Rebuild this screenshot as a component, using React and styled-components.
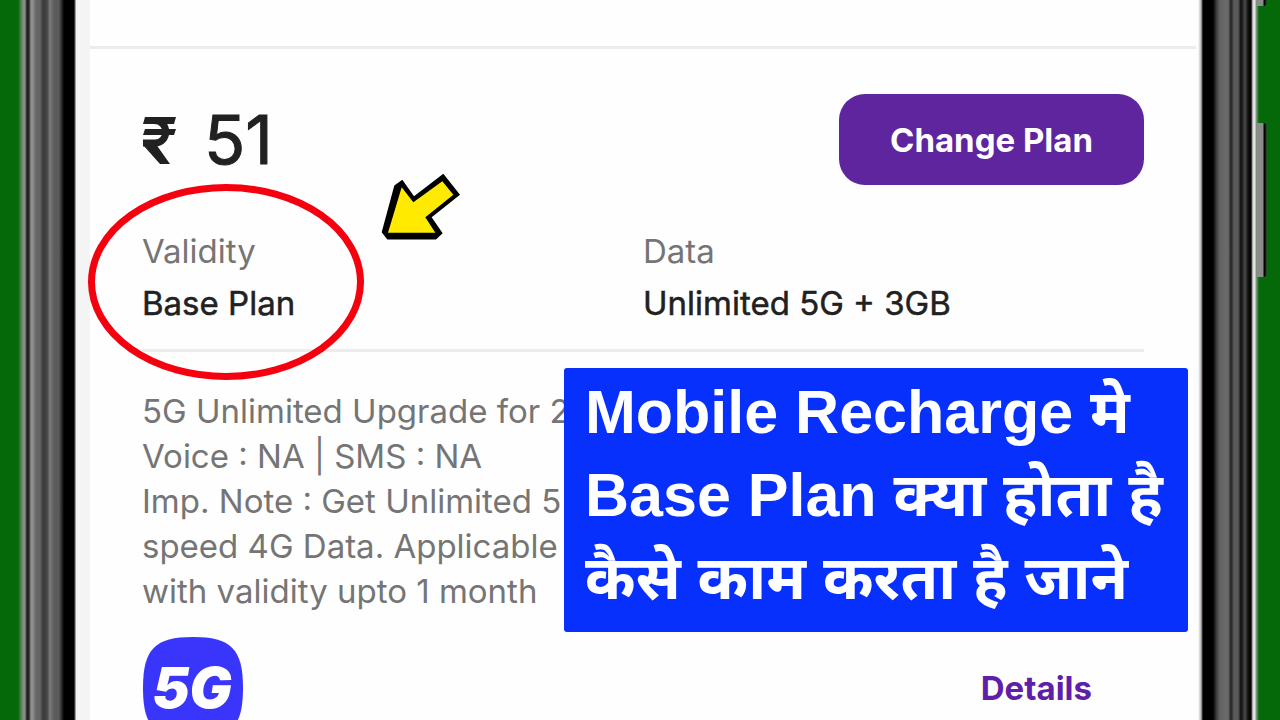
/**
 *
 * PlanDetailsPage
 *
 */

import React from 'react';
import styled, { createGlobalStyle } from 'styled-components';

const GlobalStyle = createGlobalStyle`
  * {
    box-sizing: border-box;
  }

  body {
    margin: 0;
    background-color: #05690a;
    font-family: 'Inter', 'Noto Sans', sans-serif;
  }
`;

const PageWrapper = styled.div`
  width: 100%;
  height: 100vh;
  display: flex;
  overflow: hidden;
`;

const LeftFrame = styled.div`
  flex: 0 0 76px;
  background: linear-gradient(
    to right,
    #05690a 18px,
    #7d927d 23px,
    #8a8a8a 25px,
    #1c1c1c 27px,
    #2a2a2a 29px,
    #929292 31px,
    #8c8c8c 33px,
    #666666 36px,
    #646464 40px,
    #3a3a3a 43px,
    #444444 47px,
    #7c7c7c 50px,
    #5c5c5c 54px,
    #5a5a5a 59px,
    #000000 64px,
    #000000 74px,
    #d0d0d0 76px
  );
`;

const RightFrame = styled.div`
  position: relative;
  flex: 0 0 82px;
  background: linear-gradient(
    to right,
    #ffffff 0px,
    #b8b8b8 3px,
    #000000 5px,
    #000000 15px,
    #444444 19px,
    #626262 22px,
    #6c6c6c 30px,
    #222222 33px,
    #5a5a5a 36px,
    #5a5a5a 40px,
    #0c0c0c 43px,
    #4a4a4a 47px,
    #111111 50px,
    #000000 53px,
    #dddddd 55px,
    #e4e4e4 57px,
    #8c9c8c 58px,
    #05690a 61px
  );
`;

const SideButton = styled.span`
  position: absolute;
  left: 59px;
  top: ${props => props.$top};
  width: 10px;
  height: 154px;
  border-radius: 0 4px 4px 0;
  background: linear-gradient(
    to right,
    #8c8c8c 6px,
    #050505 7px,
    #050505 8px,
    #2b5a2b 10px
  );
`;

const Screen = styled.main`
  position: relative;
  flex: 1;
  min-width: 0;
  border-left: 14px solid #f4f4f4;
  background-color: #fefefe;
`;

const TopBar = styled.header`
  height: 49px;
  margin-right: 2px;
  border-bottom: 3px solid #ececec;
`;

const PlanCard = styled.section`
  padding: 45px 54px 0 52px;
`;

const PriceRow = styled.div`
  display: flex;
  align-items: center;
  justify-content: space-between;
`;

const Price = styled.h1`
  display: flex;
  align-items: center;
  gap: 28px;
  margin: 0;
  font-size: 68px;
  font-weight: 400;
  line-height: 91px;
  color: #212121;
  -webkit-text-stroke: 1px #212121;
`;

const Rupee = styled.svg`
  width: 34px;
  height: 48px;
`;

const ChangeButton = styled.button`
  width: 305px;
  height: 91px;
  border: 0;
  border-radius: 26px;
  background-color: #5f259f;
  color: #ffffff;
  font-family: inherit;
  font-size: 33px;
  font-weight: 700;
`;

const InfoRow = styled.dl`
  display: grid;
  grid-template-columns: 1fr 1fr;
  margin: 0;
  padding: 40px 0 20px;
  border-bottom: 3px solid #ececec;
`;

const InfoItem = styled.div`
  position: relative;
  line-height: 52px;
`;

const Label = styled.dt`
  font-size: 33px;
  color: #757575;
`;

const Value = styled.dd`
  margin: 0;
  font-size: 33px;
  color: #212121;
  -webkit-text-stroke: 0.5px #212121;
`;

const Circle = styled.svg`
  position: absolute;
  left: -55px;
  top: -42px;
  width: 278px;
  height: 198px;
`;

const Arrow = styled.svg`
  position: absolute;
  left: 238px;
  top: -52px;
  width: 80px;
  height: 67px;
`;

const Description = styled.p`
  margin: 0;
  padding-top: 37px;
  font-size: 33px;
  line-height: 45px;
  color: #757575;
  white-space: nowrap;

  & > span {
    display: block;
  }
`;

const BenefitRow = styled.div`
  display: flex;
  align-items: center;
  justify-content: space-between;
  margin-top: 23px;
  padding-right: 52px;
`;

const FiveGLogo = styled.svg`
  width: 102px;
  height: 102px;
`;

const DetailsLink = styled.a`
  color: #5f1fa8;
  font-size: 33px;
  font-weight: 700;
  text-decoration: none;
`;

const Banner = styled.h2`
  position: absolute;
  right: 10px;
  top: 368px;
  width: 624px;
  height: 264px;
  margin: 0;
  padding: 3px 0 0 21px;
  border-radius: 3px;
  background-color: #0730fd;
  color: #ffffff;
  font-family: 'Liberation Sans', 'Noto Sans', 'Noto Sans Devanagari',
    sans-serif;
  font-size: 61px;
  font-weight: 700;
  line-height: 83px;
  white-space: nowrap;

  & > span {
    display: block;
  }
`;

const description = [
  '5G Unlimited Upgrade for 2',
  'Voice : NA | SMS : NA',
  'Imp. Note : Get Unlimited 5',
  'speed 4G Data. Applicable',
  'with validity upto 1 month',
];

const banner = [
  'Mobile Recharge मे',
  'Base Plan क्या होता है',
  'कैसे काम करता है जाने',
];

export class PlanDetailsPage extends React.Component {
  render() {
    return (
      <PageWrapper>
        <LeftFrame />
        <Screen>
          <TopBar />
          <PlanCard>
            <PriceRow>
              <Price>
                <Rupee viewBox="0 0 34 48" role="img" aria-label="Rupees">
                  <path d="M3 1H34L32 8H1Z" fill="#212121" />
                  <path d="M3 13H34L32 19H1Z" fill="#212121" />
                  <path
                    d="M3 4.5H12C28 4.5 27 27 13 27H1"
                    fill="none"
                    stroke="#212121"
                    strokeWidth="7"
                  />
                  <path d="M1 24H11L28 48H18L1 29Z" fill="#212121" />
                </Rupee>
                51
              </Price>
              <ChangeButton type="button">Change Plan</ChangeButton>
            </PriceRow>
            <InfoRow>
              <InfoItem>
                <Label>Validity</Label>
                <Value>Base Plan</Value>
                <Circle viewBox="0 0 278 198" aria-hidden="true">
                  <ellipse
                    cx="139"
                    cy="99"
                    rx="134.5"
                    ry="94.5"
                    fill="none"
                    stroke="#f5000f"
                    strokeWidth="7"
                  />
                </Circle>
                <Arrow viewBox="0 0 240 200" aria-hidden="true">
                  <path
                    d="M67 20L102 69L190 2L240 65L155 132L188 180L168 199H22L5 177L43 37Z"
                    fill="#000000"
                  />
                  <path
                    d="M65 42L100 87L187 24L220 65L136 132L166 179H24Z"
                    fill="#ffea00"
                  />
                </Arrow>
              </InfoItem>
              <InfoItem>
                <Label>Data</Label>
                <Value>Unlimited 5G + 3GB</Value>
              </InfoItem>
            </InfoRow>
            <Description>
              {description.map(line => (
                <span key={line}>{line}</span>
              ))}
            </Description>
            <BenefitRow>
              <FiveGLogo viewBox="0 0 102 102" role="img" aria-label="5G">
                <path
                  d="M51 0C89 0 101 12 101 51S89 102 51 102S1 90 1 51S13 0 51 0Z"
                  fill="#3a35fb"
                />
                <text
                  x="50"
                  y="71"
                  textAnchor="middle"
                  fill="#ffffff"
                  fontSize="56"
                  fontWeight="900"
                  fontStyle="italic"
                >
                  5G
                </text>
              </FiveGLogo>
              <DetailsLink href="#details">Details</DetailsLink>
            </BenefitRow>
          </PlanCard>
          <Banner>
            {banner.map(line => (
              <span key={line}>{line}</span>
            ))}
          </Banner>
        </Screen>
        <RightFrame>
          <SideButton $top="-148px" />
          <SideButton $top="123px" />
        </RightFrame>
      </PageWrapper>
    );
  }
}

const App = () => (
  <>
    <GlobalStyle />
    <PlanDetailsPage />
  </>
);

export default App;
